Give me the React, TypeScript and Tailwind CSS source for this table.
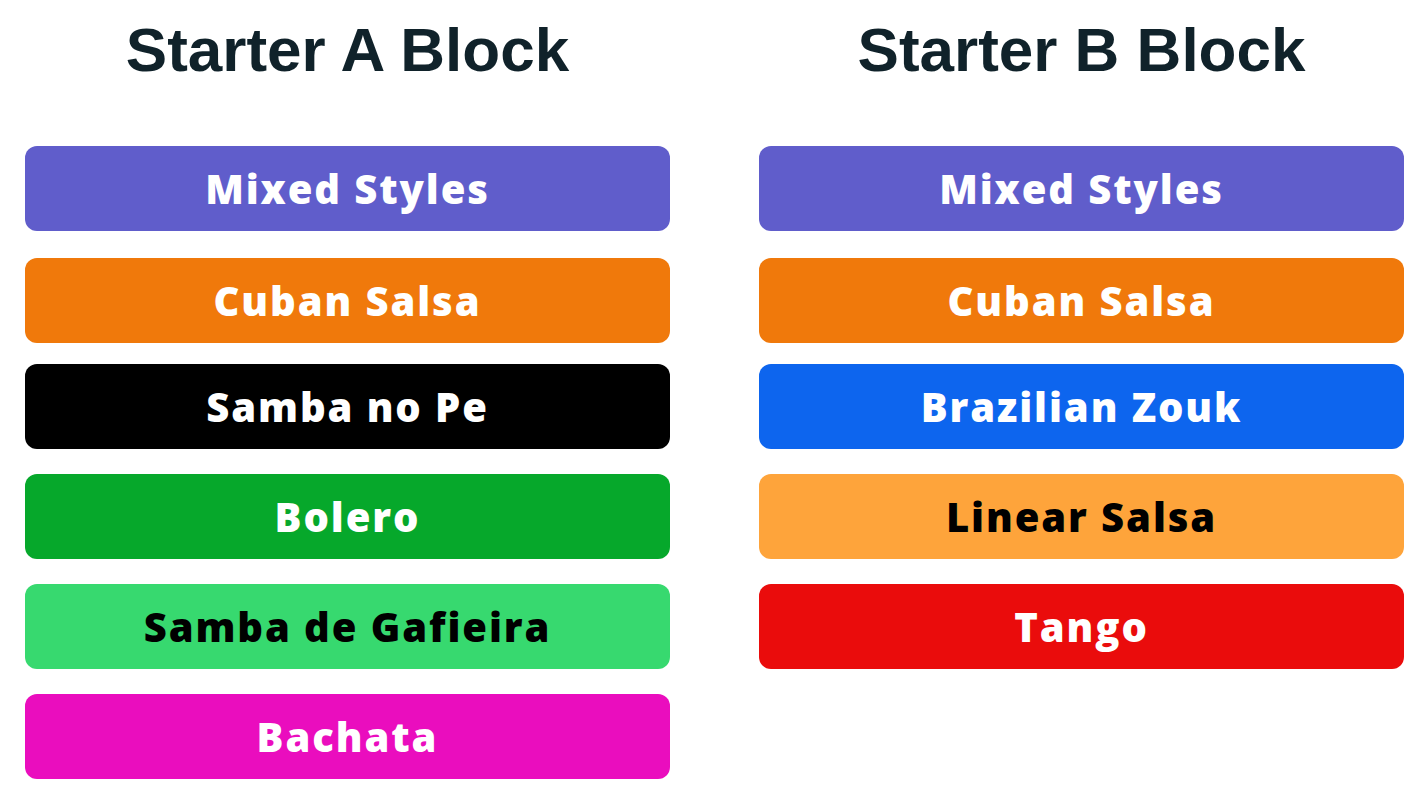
import React from 'react'

type Item = { label: string; bg: string; text: string; mt: string }

const blockA: Item[] = [
  { label: 'Mixed Styles', bg: 'bg-[#605dcb]', text: 'text-white', mt: 'mt-0' },
  { label: 'Cuban Salsa', bg: 'bg-[#f0790b]', text: 'text-white', mt: 'mt-[27px]' },
  { label: 'Samba no Pe', bg: 'bg-black', text: 'text-white', mt: 'mt-[21px]' },
  { label: 'Bolero', bg: 'bg-[#06a82b]', text: 'text-white', mt: 'mt-[25px]' },
  { label: 'Samba de Gafieira', bg: 'bg-[#37d96f]', text: 'text-black', mt: 'mt-[25px]' },
  { label: 'Bachata', bg: 'bg-[#ea0dbe]', text: 'text-white', mt: 'mt-[25px]' },
]

const blockB: Item[] = [
  { label: 'Mixed Styles', bg: 'bg-[#605dcb]', text: 'text-white', mt: 'mt-0' },
  { label: 'Cuban Salsa', bg: 'bg-[#f0790b]', text: 'text-white', mt: 'mt-[27px]' },
  { label: 'Brazilian Zouk', bg: 'bg-[#0d65ee]', text: 'text-white', mt: 'mt-[21px]' },
  { label: 'Linear Salsa', bg: 'bg-[#fea43b]', text: 'text-black', mt: 'mt-[25px]' },
  { label: 'Tango', bg: 'bg-[#ea0c0c]', text: 'text-white', mt: 'mt-[25px]' },
]

function Block({ title, items }: { title: string; items: Item[] }) {
  return (
    <div className="flex flex-col">
      <h1 className="pt-[19px] h-[146px] text-center text-[62px] leading-none font-bold text-[#10222a] font-['Liberation_Sans',Arial,sans-serif]">
        {title}
      </h1>
      <div className="flex flex-col">
        {items.map((item) => (
          <button
            key={item.label}
            className={`${item.bg} ${item.text} ${item.mt} h-[85px] w-full rounded-[12px] flex items-center justify-center text-[40px] font-extrabold tracking-[1.9px] font-['Open_Sans',sans-serif]`}
          >
            {item.label}
          </button>
        ))}
      </div>
    </div>
  )
}

export default function App() {
  return (
    <div className="min-h-screen bg-white">
      <div className="grid grid-cols-[645px_645px] gap-x-[89px] pl-[25px]">
        <Block title="Starter A Block" items={blockA} />
        <Block title="Starter B Block" items={blockB} />
      </div>
    </div>
  )
}
